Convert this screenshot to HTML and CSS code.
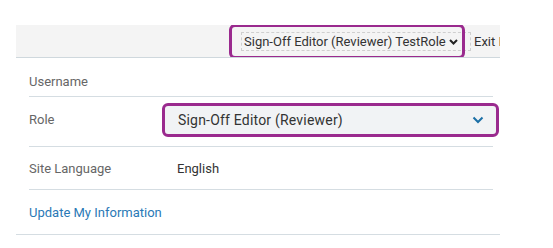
FILE: index.html
```html
<!DOCTYPE html>
<html lang="en">
<head>
    <meta charset="UTF-8">
    <meta name="viewport" content="width=device-width, initial-scale=1.0">
    <title>My Information</title>
    <link rel="stylesheet" href="styles.css">
</head>
<body>

    <div class="panel">
        <div class="topbar">
            <div class="role-switch">
                <span class="role-current">Sign-Off Editor (Reviewer) TestRole</span>
                <svg class="caret" width="9" height="6" viewBox="0 0 9 6">
                    <path d="M1 1 L4.5 4.5 L8 1" fill="none" stroke="#222" stroke-width="2"/>
                </svg>
                <span class="highlight top-highlight"></span>
            </div>
            <span class="exit">Exit Impersonation</span>
        </div>

        <div class="details">
            <div class="row row-first">
                <span class="label">Username</span>
                <span class="value"></span>
            </div>
            <div class="row row-role">
                <span class="label">Role</span>
                <div class="role-select">
                    <span>Sign-Off Editor (Reviewer)</span>
                    <svg width="12" height="8" viewBox="0 0 12 8">
                        <path d="M1.5 1.5 L6 6 L10.5 1.5" fill="none" stroke="#1b6fa6" stroke-width="2"/>
                    </svg>
                </div>
            </div>
            <div class="row">
                <span class="label">Site Language</span>
                <span class="value">English</span>
            </div>
        </div>

        <div class="footer">
            <a href="#" class="update-link">Update My Information</a>
        </div>
    </div>

</body>
</html>
```

FILE: styles.css
```css
body {
    margin: 0;
    background: white;
    font-family: Roboto, "Liberation Sans", Arial, sans-serif;
    font-size: 13px;
    color: #333;
}
.panel {
    width: 484px;
    margin: 25px 0 0 16px;
}
.topbar {
    display: flex;
    align-items: center;
    height: 32px;
    padding-left: 225px;
    background: #f4f4f4;
    border-bottom: 1px solid #cfd8dd;
    overflow: hidden;
    white-space: nowrap;
}
.role-switch {
    position: relative;
    display: flex;
    align-items: center;
    gap: 3px;
    flex-shrink: 0;
    width: 226px;
    height: 17px;
    padding-left: 2px;
    border: 1px dashed #cfcfcf;
    color: #333;
}
.caret {
    margin-top: 2px;
}
.highlight {
    position: absolute;
    border: 3px solid #9a2a8e;
    border-radius: 6px;
    box-sizing: border-box;
}
.top-highlight {
    left: -13px;
    top: -9px;
    width: 236px;
    height: 35px;
}
.exit {
    flex-shrink: 0;
    margin-left: 3px;
    color: #333;
}
.details {
    margin: 0 7px 0 13px;
}
.row {
    display: flex;
    align-items: center;
    height: 42px;
    border-bottom: 1px solid #d5dde2;
}
.row-first {
    height: 38px;
    align-items: flex-start;
}
.row-first .label {
    margin-top: 16px;
}
.row-role {
    height: 45px;
    padding-bottom: 4px;
}
.label {
    width: 133px;
    flex-shrink: 0;
    color: #666;
}
.value {
    padding-left: 15px;
    color: #333;
}
.role-select {
    display: flex;
    align-items: center;
    justify-content: space-between;
    flex-shrink: 0;
    width: 337px;
    height: 34px;
    box-sizing: border-box;
    padding: 0 12px 0 13px;
    background: #f1f3f5;
    border: 3px solid #9a2a8e;
    border-radius: 6px;
    font-size: 14px;
    letter-spacing: 0.2px;
    color: #333;
}
.footer {
    display: flex;
    align-items: center;
    height: 44px;
    padding-left: 13px;
    border-bottom: 1px solid #d5dde2;
}
.update-link {
    color: #2a79b6;
    text-decoration: none;
}
```
